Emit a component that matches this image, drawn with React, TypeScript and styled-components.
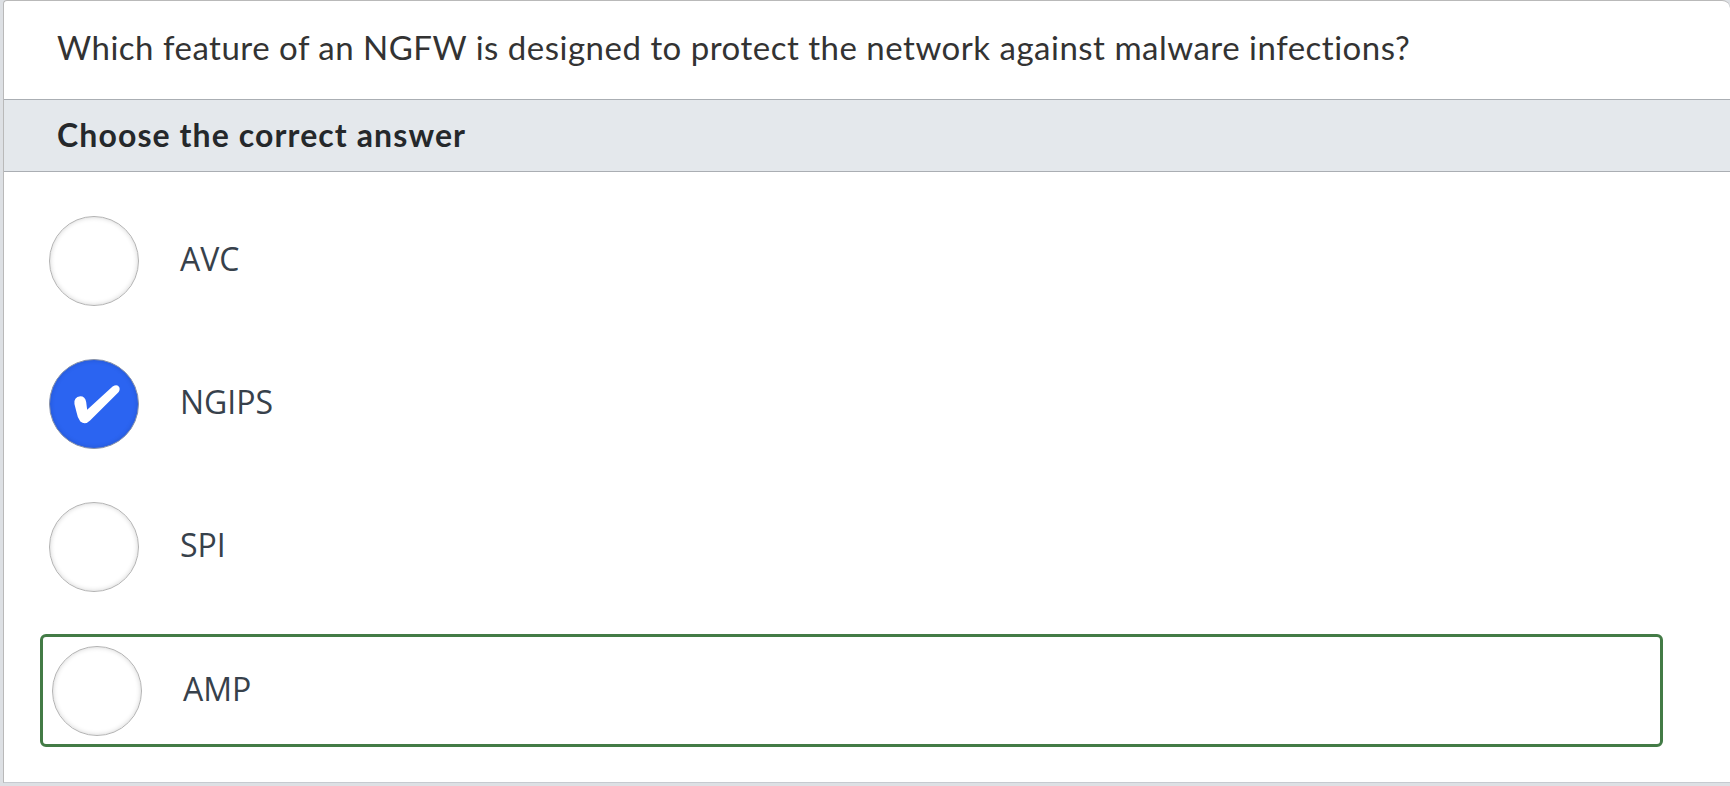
import React from "react";
import styled, { createGlobalStyle } from "styled-components";

const Global = createGlobalStyle`
  html, body { margin: 0; padding: 0; background: #dde0e4; }
  body { font-family: "Lato", "Open Sans", sans-serif; }
  * { box-sizing: border-box; }
`;

const Page = styled.div`
  height: 786px;
  padding-left: 3px;
  padding-bottom: 3px;
  background: #dde0e4;
  display: flex;
  flex-direction: column;
`;

const Card = styled.div`
  flex: 1;
  display: flex;
  flex-direction: column;
  background: #ffffff;
  border-top: 1px solid #b9b9b9;
  border-left: 1px solid #b9b9b9;
  border-bottom: 1px solid #c6cad0;
  border-radius: 4px 8px 0 0;
`;

const Question = styled.div`
  height: 98px;
  padding: 26px 0 0 53px;
  font-family: "Lato", sans-serif;
  font-size: 33px;
  color: #333333;
  letter-spacing: 0.5px;
  white-space: nowrap;
`;

const Band = styled.div`
  height: 73px;
  display: flex;
  align-items: center;
  padding-left: 53px;
  background: #e4e8ec;
  border-top: 1px solid #aaaeb3;
  border-bottom: 1px solid #aaaeb3;
  font-family: "Lato", sans-serif;
  font-weight: 700;
  font-size: 32px;
  color: #25282b;
  letter-spacing: 1.1px;
  padding-bottom: 3px;
`;

const List = styled.div`
  display: flex;
  flex-direction: column;
  gap: 36px;
  padding: 35px 67px 0 36px;
`;

const Row = styled.div<{ $highlight?: boolean }>`
  display: flex;
  align-items: center;
  gap: 41px;
  height: ${(p) => (p.$highlight ? "113px" : "107px")};
  padding: 0 9px;
  border: ${(p) => (p.$highlight ? "3px solid #437b46" : "none")};
  border-radius: 6px;
  margin-top: ${(p) => (p.$highlight ? "-2px" : "0")};
`;

const Radio = styled.div<{ $checked?: boolean }>`
  width: 90px;
  height: 90px;
  flex: none;
  border-radius: 50%;
  border: 1px solid ${(p) => (p.$checked ? "#8a93a6" : "#b3b3b3")};
  background: ${(p) => (p.$checked ? "#2b64f1" : "#ffffff")};
  box-shadow: inset 0 0 5px rgba(0, 0, 0, ${(p) => (p.$checked ? 0.15 : 0.18)});
  display: flex;
  align-items: center;
  justify-content: center;
`;

const Label = styled.span`
  font-family: "Open Sans", sans-serif;
  font-size: 32px;
  color: #37414b;
  margin-top: -4px;
`;

const Check = () => (
  <svg width="90" height="90" viewBox="0 0 90 90">
    <path
      d="M25 45 Q24 38 31 37 Q36 37 37 43 L38 51 L64 27 Q69 24 71 28 Q72 31 69 34 L41 62 Q36 67 31 63 Q28 59 27 53 Z"
      fill="#ffffff"
    />
  </svg>
);

const options = [
  { label: "AVC" },
  { label: "NGIPS", checked: true },
  { label: "SPI" },
  { label: "AMP", highlight: true },
];

export default function App() {
  return (
    <>
      <Global />
      <Page>
        <Card>
          <Question>
            Which feature of an NGFW is designed to protect the network against malware infections?
          </Question>
          <Band>Choose the correct answer</Band>
          <List>
            {options.map((o) => (
              <Row key={o.label} $highlight={o.highlight}>
                <Radio $checked={o.checked}>{o.checked && <Check />}</Radio>
                <Label>{o.label}</Label>
              </Row>
            ))}
          </List>
        </Card>
      </Page>
    </>
  );
}
